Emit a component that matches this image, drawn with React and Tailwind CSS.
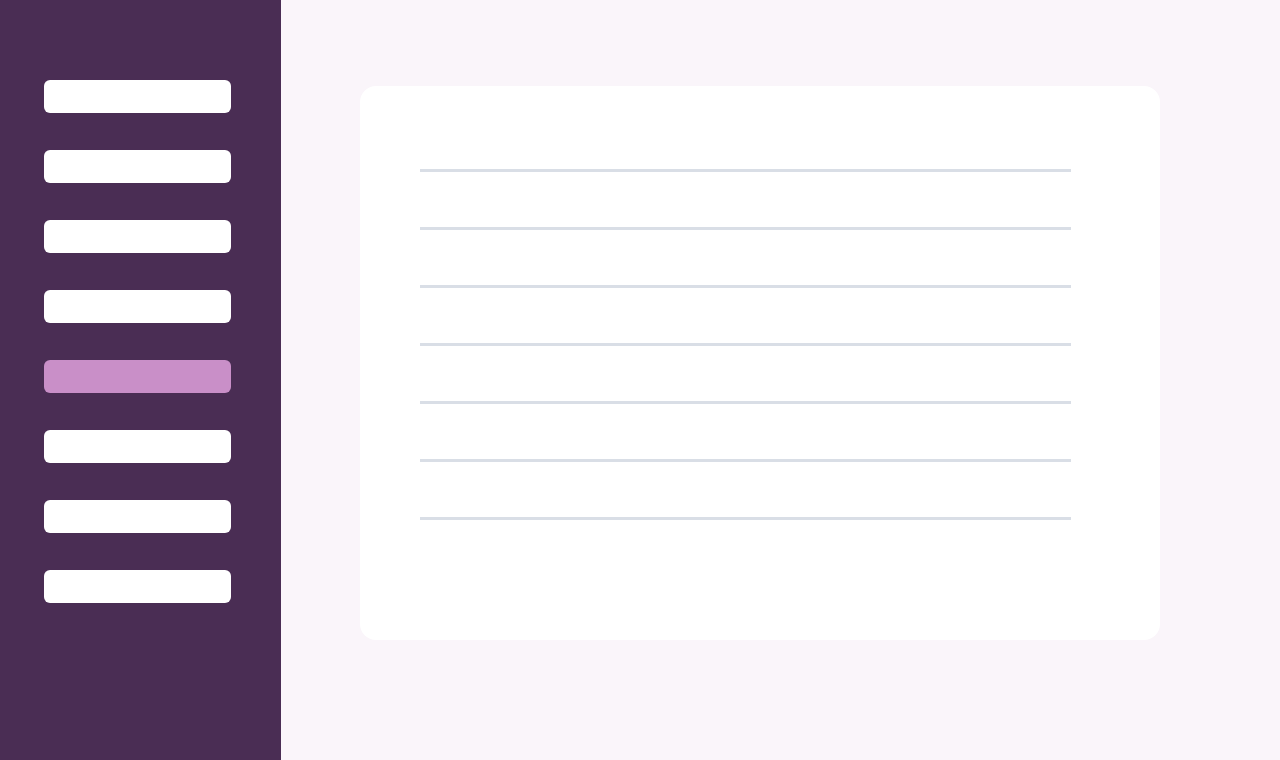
export default function App() {
  const items = [0, 1, 2, 3, 4, 5, 6, 7];
  const lines = [0, 1, 2, 3, 4, 5, 6];
  return (
    <div className="flex w-[1280px] h-[760px] bg-[#faf5fa]" style={{ fontFamily: '"Liberation Sans", sans-serif' }}>
      <aside className="w-[281px] shrink-0 bg-[#4a2d54] pt-[80px] pl-[44px] flex flex-col gap-[37px]">
        {items.map((i) => (
          <div
            key={i}
            className={`w-[187px] h-[33px] rounded-[6px] ${i === 4 ? "bg-[#c98fc8]" : "bg-white"}`}
          />
        ))}
      </aside>
      <main className="flex-1 pl-[79px] pt-[86px]">
        <div className="w-[800px] h-[554px] bg-white rounded-[16px] pt-[83px] pl-[60px] flex flex-col gap-[55px]">
          {lines.map((i) => (
            <div key={i} className="w-[651px] h-[3px] bg-[#d9dee6]" />
          ))}
        </div>
      </main>
    </div>
  );
}
